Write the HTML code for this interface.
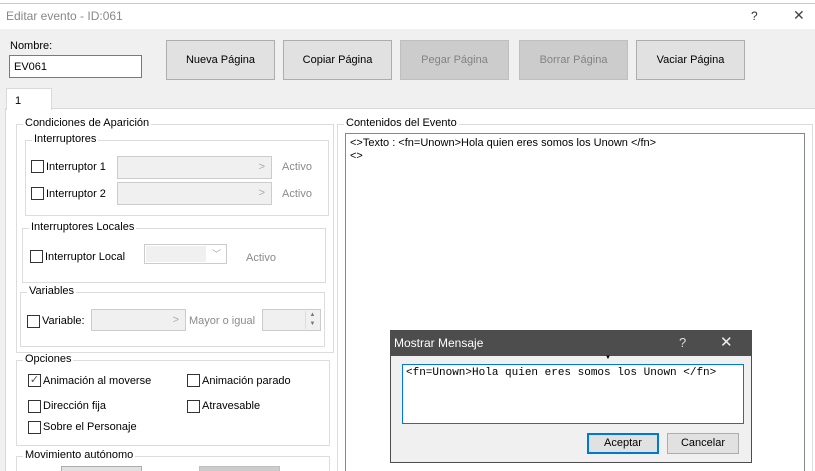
<!DOCTYPE html>
<html style="width:815px;height:471px;overflow:hidden"><head><meta charset="utf-8"><style>
*{box-sizing:border-box;margin:0;padding:0}
body{width:815px;height:471px;overflow:hidden;background:#f0f0f0;font-family:"Liberation Sans",sans-serif;font-size:11px;color:#000;position:relative}
.a{position:absolute}
.btn{position:absolute;background:#e1e1e1;border:1px solid #adadad;text-align:center;font-size:11px}
.dis{background:#cccccc;border-color:#bfbfbf;color:#838383}
.grp{position:absolute;border:1px solid #dcdcdc}
.gt{position:absolute;top:-8px;left:6px;background:#fff;padding:0 2px;font-size:11px;white-space:nowrap}
.cb{position:absolute;width:13px;height:13px;border:1px solid #333;background:#fff}
.cmb{position:absolute;background:#f0f0f0;border:1px solid #cccccc}
.gray{color:#8a8a8a}
</style></head><body>
<div class="a" style="left:0;top:0;width:815px;height:29px;background:#fff"></div>
<div class="a" style="left:0;top:3px;width:815px;height:1px;background:#c8c8c8"></div>
<div class="a gray" style="left:6px;top:9px;font-size:12px;color:#888">Editar evento - ID:061</div>
<div class="a" style="left:751px;top:9px;font-size:12px;color:#333">?</div>
<div class="a" style="left:793px;top:7px;font-size:14px;color:#444;font-weight:lighter">✕</div>

<div class="a" style="left:10px;top:40px">Nombre:</div>
<div class="a" style="left:9px;top:55px;width:133px;height:23px;background:#fff;border:1px solid #7a7a7a;padding:5px 4px">EV061</div>
<div class="btn" style="left:166px;top:40px;width:109px;height:40px;line-height:38px">Nueva Página</div>
<div class="btn" style="left:283px;top:40px;width:109px;height:40px;line-height:38px">Copiar Página</div>
<div class="btn dis" style="left:400px;top:40px;width:109px;height:40px;line-height:38px">Pegar Página</div>
<div class="btn dis" style="left:519px;top:40px;width:109px;height:40px;line-height:38px">Borrar Página</div>
<div class="btn" style="left:636px;top:40px;width:109px;height:40px;line-height:38px">Vaciar Página</div>

<div class="a" style="left:5px;top:108px;width:812px;height:365px;background:#fff;border:1px solid #d9d9d9"></div>
<div class="a" style="left:6px;top:88px;width:46px;height:22px;background:#fff;border:1px solid #d9d9d9;border-bottom:none;padding:6px 8px">1</div>

<div class="grp" style="left:16px;top:124px;width:318px;height:229px"><span class="gt">Condiciones de Aparición</span></div>
<div class="grp" style="left:25px;top:140px;width:304px;height:76px"><span class="gt">Interruptores</span></div>
<div class="cb" style="left:31px;top:160px"></div><div class="a" style="left:46px;top:161px">Interruptor 1</div>
<div class="cmb" style="left:117px;top:156px;width:155px;height:23px"><span class="a" style="right:6px;top:4px;color:#aaa">&gt;</span></div>
<div class="a gray" style="left:282px;top:161px">Activo</div>
<div class="cb" style="left:31px;top:187px"></div><div class="a" style="left:46px;top:188px">Interruptor 2</div>
<div class="cmb" style="left:117px;top:182px;width:155px;height:23px"><span class="a" style="right:6px;top:4px;color:#aaa">&gt;</span></div>
<div class="a gray" style="left:282px;top:188px">Activo</div>

<div class="grp" style="left:22px;top:228px;width:304px;height:55px"><span class="gt">Interruptores Locales</span></div>
<div class="cb" style="left:30px;top:250px"></div><div class="a" style="left:45px;top:251px">Interruptor Local</div>
<div class="cmb" style="left:144px;top:244px;width:83px;height:20px;background:#fff"><div class="a" style="left:1px;top:1px;width:60px;height:16px;background:#f0f0f0"></div><span class="a" style="right:5px;top:2px;color:#aaa;font-size:9px">﹀</span></div>
<div class="a gray" style="left:246px;top:252px">Activo</div>

<div class="grp" style="left:20px;top:292px;width:305px;height:55px"><span class="gt">Variables</span></div>
<div class="cb" style="left:27px;top:315px"></div><div class="a" style="left:42px;top:315px">Variable:</div>
<div class="cmb" style="left:91px;top:309px;width:95px;height:22px"><span class="a" style="right:6px;top:4px;color:#aaa">&gt;</span></div>
<div class="a gray" style="left:189px;top:315px">Mayor o igual</div>
<div class="cmb" style="left:262px;top:309px;width:59px;height:22px"><div class="a" style="right:1px;top:1px;width:14px;height:18px;border-left:1px solid #ddd;font-size:6px;color:#777;text-align:center;line-height:9px">▲<br>▼</div></div>

<div class="grp" style="left:16px;top:360px;width:314px;height:86px"><span class="gt">Opciones</span></div>
<div class="cb" style="left:28px;top:374px;color:#555;font-size:11px;line-height:10px;text-align:center">✓</div><div class="a" style="left:43px;top:375px">Animación al moverse</div>
<div class="cb" style="left:187px;top:374px"></div><div class="a" style="left:202px;top:375px">Animación parado</div>
<div class="cb" style="left:28px;top:400px"></div><div class="a" style="left:43px;top:400px">Dirección fija</div>
<div class="cb" style="left:187px;top:400px"></div><div class="a" style="left:202px;top:400px">Atravesable</div>
<div class="cb" style="left:28px;top:421px"></div><div class="a" style="left:43px;top:421px">Sobre el Personaje</div>

<div class="grp" style="left:16px;top:456px;width:314px;height:30px"><span class="gt">Movimiento autónomo</span></div>
<div class="a" style="left:61px;top:466px;width:81px;height:10px;background:#e1e1e1;border:1px solid #adadad"></div>
<div class="a" style="left:199px;top:466px;width:81px;height:10px;background:#cccccc;border:1px solid #bfbfbf"></div>

<div class="grp" style="left:337px;top:124px;width:476px;height:360px"><span class="gt">Contenidos del Evento</span></div>
<div class="a" style="left:345px;top:133px;width:460px;height:345px;background:#fff;border:1px solid #828790;padding:3px 4px;line-height:13px">&lt;&gt;Texto : &lt;fn=Unown&gt;Hola quien eres somos los Unown &lt;/fn&gt;<br>&lt;&gt;</div>

<div class="a" style="left:390px;top:330px;width:362px;height:133px;background:#f0f0f0;border:1px solid #4d4d4d"></div>
<div class="a" style="left:390px;top:330px;width:362px;height:26px;background:#4d4d4d;color:#fff;font-size:12px;padding:6px 4px">Mostrar Mensaje</div>
<div class="a" style="left:679px;top:335px;color:#ddd;font-size:13px">?</div>
<div class="a" style="left:720px;top:333px;color:#eee;font-size:15px">✕</div>
<div class="a" style="left:605px;top:355px;font-size:6px">▼</div>
<div class="a" style="left:402px;top:364px;width:342px;height:60px;background:#fff;border:1px solid #0078d7;padding:2px 3px;font-family:'Liberation Mono',monospace;font-size:11px">&lt;fn=Unown&gt;Hola quien eres somos los Unown &lt;/fn&gt;</div>
<div class="btn" style="left:587px;top:433px;width:72px;height:21px;line-height:17px;border:2px solid #0078d7">Aceptar</div>
<div class="btn" style="left:667px;top:433px;width:72px;height:21px;line-height:19px">Cancelar</div>
</body></html>
